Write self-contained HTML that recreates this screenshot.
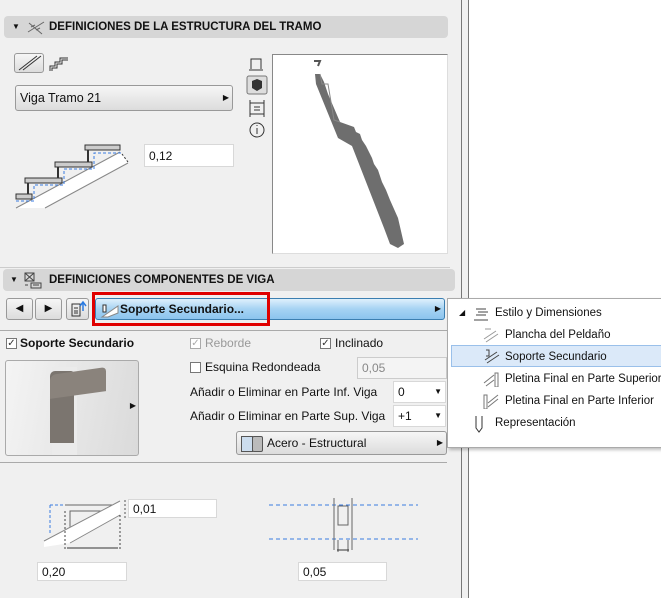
<!DOCTYPE html><html><head><style>
body{margin:0;width:661px;height:598px;background:#fff;position:relative;overflow:hidden;font-family:"Liberation Sans",sans-serif;font-size:12px;color:#111}
.a{position:absolute;white-space:nowrap}
.hdr{background:#d6d6d6;border-radius:4px;font-weight:bold;font-size:11.5px;line-height:22px}
.inp{background:#fff;border:1px solid #d8d8d8;line-height:20px;padding-left:4px;box-sizing:border-box}
.btn{border:1px solid #999;border-radius:3px;background:linear-gradient(#f6f6f6,#dcdcdc);box-sizing:border-box}
.cb{width:11px;height:11px;border:1px solid #777;background:#fff;box-sizing:border-box;font-size:10px;line-height:9px;text-align:center;color:#333}
.mi{position:absolute;left:0;width:214px;height:22px;line-height:22px;font-size:11.5px;white-space:nowrap}
</style></head><body>
<div class="a" style="left:0;top:0;width:461px;height:598px;background:#f0f0f0"></div>
<div class="a" style="left:461px;top:0;width:1px;height:598px;background:#777"></div>
<div class="a" style="left:462px;top:0;width:6px;height:598px;background:#f0f0f0"></div>
<div class="a" style="left:468px;top:0;width:1px;height:598px;background:#777"></div>

<div class="a hdr" style="left:4px;top:16px;width:444px;height:22px"><span class="a" style="left:8px;top:0;font-size:8px">▼</span><svg class="a" style="left:22px;top:2px" width="20" height="18"><path d="M2 14L18 4M3 5L16 16M5 9L9 7M10 12L14 10" stroke="#666" fill="none"/></svg><span class="a" style="left:45px">DEFINICIONES DE LA ESTRUCTURA DEL TRAMO</span></div>

<div class="a btn" style="left:14px;top:53px;width:30px;height:20px"><svg width="28" height="18"><path d="M4 16L22 2M8 16L26 2" stroke="#333" fill="none"/></svg></div>
<svg class="a" style="left:48px;top:55px" width="26" height="18"><path d="M2 16V11H7V7H12V3H20M4 16V13H9V9H14V5H20" stroke="#333" fill="none"/></svg>

<div class="a btn" style="left:15px;top:85px;width:218px;height:26px;line-height:24px;padding-left:4px;font-size:12.5px">Viga Tramo 21<span class="a" style="right:3px;top:0;font-size:8px">▶</span></div>

<svg class="a" style="left:14px;top:140px" width="120" height="72">
<path d="M2 68L106 12L114 23L31 68Z" fill="#fff"/>
<path d="M2 68L106 12M31 68L114 23" stroke="#888" fill="none"/>
<path d="M2 54H18V59H2ZM11 38H48V43H11ZM41 22H78V27H41ZM71 5H106V10H71Z" fill="#ccc" stroke="#333"/>
<path d="M14 43V54M44 27V38M74 10V22" stroke="#333" stroke-width="2"/>
<path d="M2 61H20V45H50V29H80V13H108" stroke="#3a7be0" stroke-dasharray="3,2" fill="none"/>
<path d="M108 14L114 22" stroke="#333" stroke-dasharray="2,2"/>
</svg>
<div class="a inp" style="left:144px;top:144px;width:90px;height:23px;line-height:23px">0,12</div>

<svg class="a" style="left:246px;top:55px" width="22" height="86">
<path d="M5 14V4H15V14M3 15H17" stroke="#333" fill="none"/>
<rect x="1" y="21" width="20" height="18" rx="2" fill="#ddd" stroke="#777"/><path d="M6 26L11 24L16 26V33L11 36L6 33Z" fill="#333"/>
<path d="M4 45V62M18 45V62M4 48H18M4 59H18M8 52H14M8 55H14" stroke="#333" fill="none"/>
<circle cx="11" cy="75" r="7" fill="none" stroke="#333"/><path d="M11 73V79M11 70V71" stroke="#333"/>
</svg>

<div class="a" style="left:272px;top:54px;width:174px;height:198px;background:#fff;border:1px solid #888;border-right-color:#ddd;border-bottom-color:#ddd"></div>
<svg class="a" style="left:272px;top:54px" width="175" height="198">
<path d="M42 7H48L46 12" stroke="#555" stroke-width="2" fill="none"/>
<path d="M43 20L48 20L50 24L52 28L54 34L56 40L68 68L82 73L84 78L88 80L90 86L94 92L96 96L100 104L102 110L106 116L110 128L114 136L118 146L126 164L132 190L126 194L118 190L112 174L80 92L66 84L44 30Z" fill="#6e6e6e"/>
<path d="M48 20L50 30L56 30L62 66L68 68" fill="none" stroke="#888"/>
</svg>

<div class="a" style="left:0;top:267px;width:450px;height:1px;background:#ccc"></div>
<div class="a hdr" style="left:3px;top:269px;width:452px;height:22px"><span class="a" style="left:7px;top:0;font-size:8px">▼</span><svg class="a" style="left:20px;top:2px" width="20" height="18"><path d="M2 2H11V10H2ZM2 2L11 10M11 2L2 10M8 12H18V17H8ZM10 14H16M2 14H5" stroke="#444" fill="none"/></svg><span class="a" style="left:46px">DEFINICIONES COMPONENTES DE VIGA</span></div>

<div class="a btn" style="left:6px;top:298px;width:27px;height:22px;text-align:center;line-height:20px;font-size:10px">◀</div>
<div class="a btn" style="left:35px;top:298px;width:27px;height:22px;text-align:center;line-height:20px;font-size:10px">▶</div>
<div class="a btn" style="left:66px;top:298px;width:23px;height:22px"><svg width="21" height="20"><path d="M5 5H13V17H5ZM7 9H11M7 12H11M7 14H11" stroke="#333" fill="none"/><path d="M16 12V4M13 7L16 3L19 7" stroke="#2a7ae0" fill="none" stroke-width="1.5"/></svg></div>
<div class="a" style="left:95px;top:298px;width:350px;height:22px;border:1px solid #3c7fb1;border-radius:3px;box-sizing:border-box;background:linear-gradient(#dff0fc,#a6d3f3 50%,#8cc4ee);font-weight:bold;line-height:20px"><svg class="a" style="left:4px;top:3px" width="20" height="16"><path d="M2 15L18 4V11L8 15Z" fill="#fff" stroke="#888"/><path d="M3 3H6V10H3Z" fill="#fff" stroke="#333"/></svg><span class="a" style="left:24px">Soporte Secundario...</span><span class="a" style="right:3px;font-size:8px;font-weight:normal">▶</span></div>
<div class="a" style="left:92px;top:292px;width:178px;height:34px;border:3px solid #e00000;box-sizing:border-box"></div>

<div class="a" style="left:0;top:330px;width:447px;height:1px;background:#aaa"></div>

<div class="a cb" style="left:6px;top:338px">✓</div><div class="a" style="left:20px;top:336px;font-weight:bold">Soporte Secundario</div>
<div class="a cb" style="left:190px;top:338px;border-color:#aaa;color:#aaa">✓</div><div class="a" style="left:205px;top:336px;color:#999">Reborde</div>
<div class="a cb" style="left:320px;top:338px">✓</div><div class="a" style="left:335px;top:336px">Inclinado</div>

<div class="a" style="left:5px;top:360px;width:132px;height:94px;border:1px solid #aaa;border-radius:3px;background:linear-gradient(100deg,#f4f4f4,#dadada);overflow:hidden">
<div class="a" style="left:46px;top:6px;width:25px;height:90px;background:#ebebeb"></div>
<div class="a" style="left:44px;top:10px;width:24px;height:72px;background:#7b756f;border-radius:5px 3px 0 0"></div>
<div class="a" style="left:44px;top:10px;width:56px;height:24px;background:#8a837c;border-radius:6px 4px 0 0;transform:skewY(-8deg)"></div>
<span class="a" style="right:2px;top:40px;font-size:8px">▶</span></div>

<div class="a cb" style="left:190px;top:362px"></div><div class="a" style="left:205px;top:360px">Esquina Redondeada</div>
<div class="a inp" style="left:357px;top:357px;width:90px;height:22px;color:#888;background:#f4f4f4;border-color:#ccc">0,05</div>
<div class="a" style="left:190px;top:385px">Añadir o Eliminar en Parte Inf. Viga</div>
<div class="a inp" style="left:393px;top:381px;width:53px;height:22px">0<span class="a" style="right:3px;top:0;font-size:8px">▼</span></div>
<div class="a" style="left:190px;top:409px">Añadir o Eliminar en Parte Sup. Viga</div>
<div class="a inp" style="left:393px;top:405px;width:53px;height:22px">+1<span class="a" style="right:3px;top:0;font-size:8px">▼</span></div>
<div class="a btn" style="left:236px;top:431px;width:211px;height:24px;line-height:22px"><span class="a" style="left:4px;top:4px;width:10px;height:14px;border:1px solid #555;background:#cde"></span><span class="a" style="left:15px;top:4px;width:9px;height:14px;border:1px solid #555;background:#bbb;border-radius:2px"></span><span class="a" style="left:30px">Acero - Estructural</span><span class="a" style="right:3px;font-size:8px">▶</span></div>

<div class="a" style="left:0;top:462px;width:447px;height:1px;background:#aaa"></div>

<svg class="a" style="left:40px;top:495px" width="90" height="62">
<path d="M10 10H80M10 10V40" stroke="#3a7be0" stroke-dasharray="3,2" fill="none"/>
<path d="M25 10H78V16H30V40" stroke="#666" fill="none"/>
<path d="M4 45L80 6V20L30 48L4 52Z" fill="#fff"/><path d="M4 46L80 6M30 48L80 20" stroke="#888"/>
<path d="M25 16V55M80 20V55" stroke="#444" stroke-dasharray="2,2"/><path d="M27 53H78" stroke="#333"/>
<path d="M85 5V24" stroke="#555" stroke-dasharray="2,2"/>
</svg>
<div class="a inp" style="left:128px;top:499px;width:89px;height:19px;line-height:19px">0,01</div>
<div class="a inp" style="left:37px;top:562px;width:90px;height:19px;line-height:19px">0,20</div>

<svg class="a" style="left:268px;top:495px" width="150" height="60">
<path d="M1 10H150M1 44H150" stroke="#3a7be0" stroke-dasharray="4,3"/>
<path d="M66 3V55M84 3V55" stroke="#666"/><path d="M70 11H80V30H70ZM70 45V57M80 45V57" stroke="#666" fill="none"/>
<path d="M69 55H81" stroke="#333"/>
</svg>
<div class="a inp" style="left:298px;top:562px;width:89px;height:19px;line-height:19px">0,05</div>

<div class="a" style="left:447px;top:298px;width:214px;height:148px;background:#fff;border:1px solid #aaa;border-right:none;box-shadow:2px 2px 3px rgba(0,0,0,.25)">
<div class="mi" style="top:3px"><span class="a" style="left:11px;font-size:8px">◢</span><svg class="a" style="left:24px;top:3px" width="20" height="18"><path d="M4 4H14M6 7H16M4 10H14M2 15H16" stroke="#444" fill="none"/></svg><span class="a" style="left:47px">Estilo y Dimensiones</span></div>
<div class="mi" style="top:25px"><svg class="a" style="left:34px;top:3px" width="18" height="16"><path d="M3 2H9M2 12L14 4M4 15L16 7" stroke="#999"/></svg><span class="a" style="left:57px">Plancha del Peldaño</span></div>
<div class="mi" style="top:46px;left:3px;width:211px;background:#dbe9f9;border:1px solid #9ac0ea;box-sizing:border-box;border-right:none"><svg class="a" style="left:31px;top:2px" width="18" height="16"><path d="M3 2H6V8H3M2 12L14 4M4 15L16 7" stroke="#444" fill="none"/></svg><span class="a" style="left:53px">Soporte Secundario</span></div>
<div class="mi" style="top:69px"><svg class="a" style="left:34px;top:3px" width="18" height="16"><path d="M2 12L12 4M4 15L12 9M13 2H16V16H13Z" stroke="#777" fill="none"/></svg><span class="a" style="left:57px">Pletina Final en Parte Superior</span></div>
<div class="mi" style="top:91px"><svg class="a" style="left:34px;top:3px" width="18" height="16"><path d="M6 10L16 2M6 14L16 6M2 2H5V16H2Z" stroke="#777" fill="none"/></svg><span class="a" style="left:57px">Pletina Final en Parte Inferior</span></div>
<div class="mi" style="top:113px"><svg class="a" style="left:24px;top:2px" width="14" height="20"><path d="M4 2V14L7 18L10 14V2" stroke="#333" fill="none"/></svg><span class="a" style="left:47px">Representación</span></div>
</div>
</body></html>
